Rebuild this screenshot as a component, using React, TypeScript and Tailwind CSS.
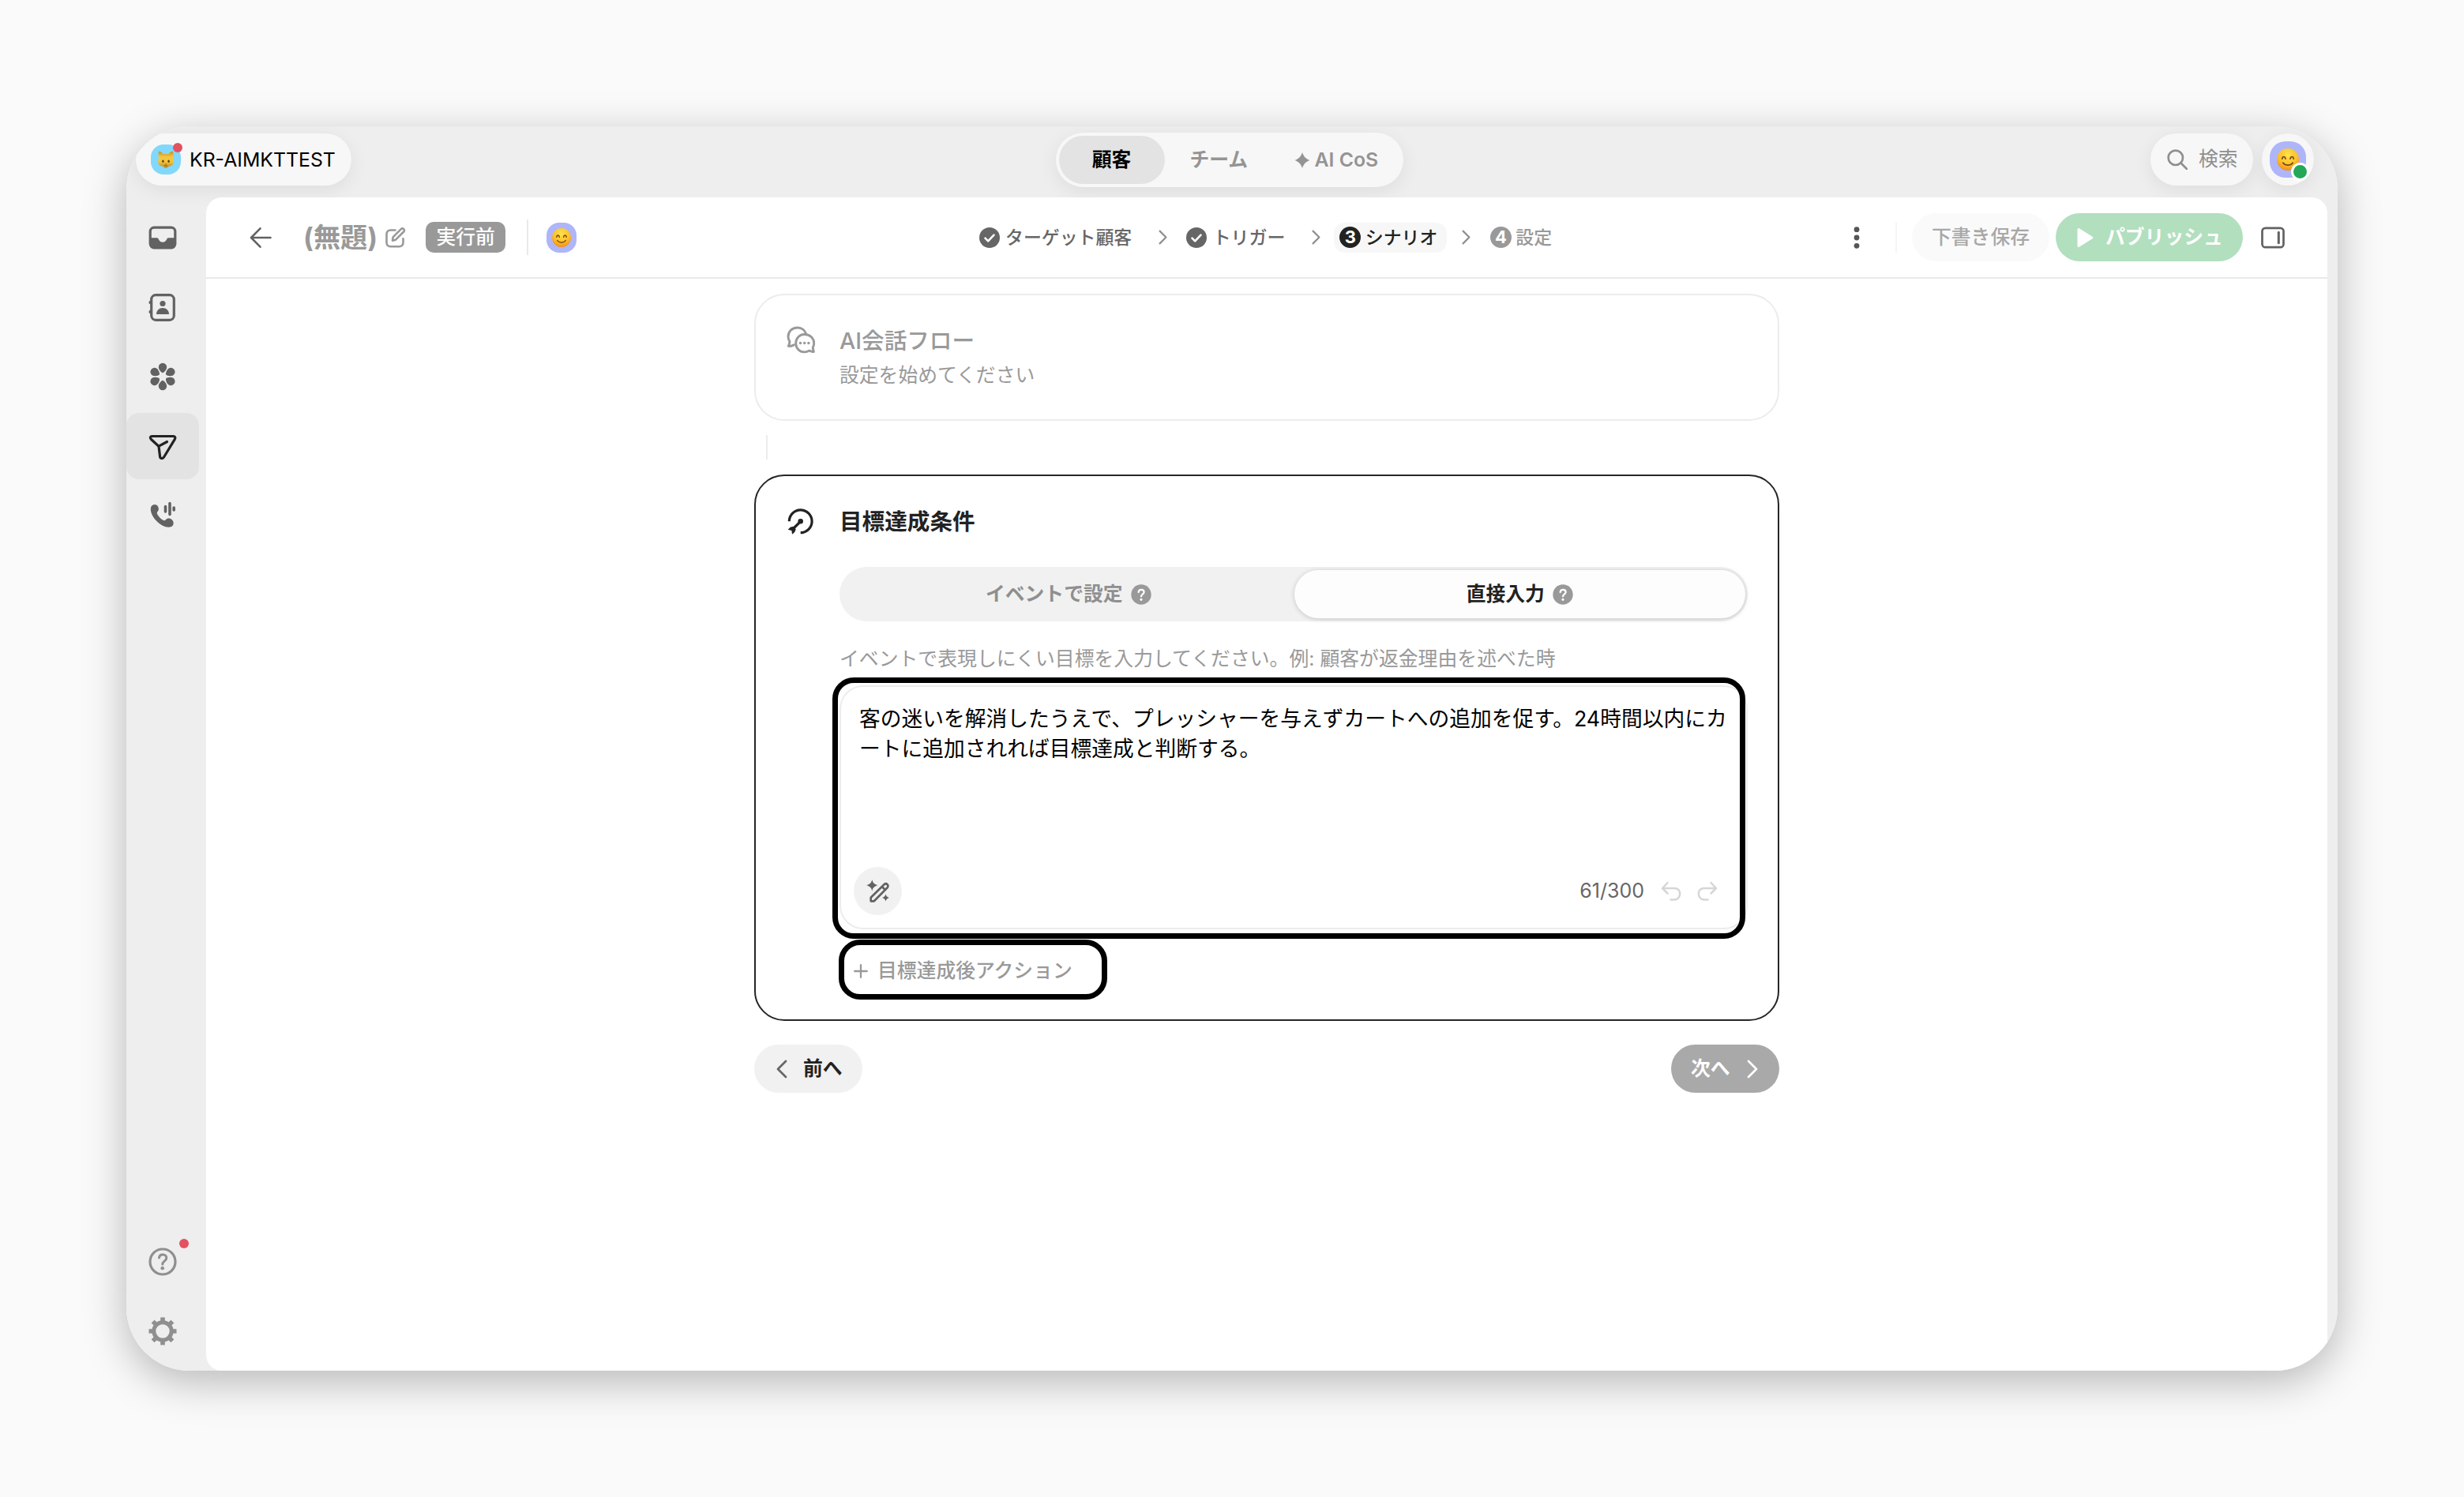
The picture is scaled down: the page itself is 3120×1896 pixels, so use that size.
import type { ReactNode } from "react";

const navItems = [
  { id: "inbox", icon: <InboxIcon />, active: false },
  { id: "contacts", icon: <ContactsIcon />, active: false },
  { id: "flower", icon: <FlowerIcon />, active: false },
  { id: "campaign", icon: <CampaignIcon />, active: true },
  { id: "call", icon: <CallIcon />, active: false },
];

const steps = [
  { label: "ターゲット顧客", state: "done", number: 1 },
  { label: "トリガー", state: "done", number: 2 },
  { label: "シナリオ", state: "current", number: 3 },
  { label: "設定", state: "todo", number: 4 },
];

function InboxIcon() {
  return (
    <svg viewBox="0 0 38 38" className="size-[38px]" fill="none">
      <rect x="3.2" y="6.2" width="31.6" height="25.6" rx="5" stroke="#626262" strokeWidth="3.2" />
      <path d="M3 19.2h9c2 0 2 5.5 7 5.5s5-5.5 7-5.5H35V28c0 3-2 5-5 5H8c-3 0-5-2-5-5z" fill="#626262" />
    </svg>
  );
}

function ContactsIcon() {
  return (
    <svg viewBox="0 0 38 38" className="size-[38px]" fill="none">
      <rect x="4.7" y="3.7" width="28.6" height="31.6" rx="5.5" stroke="#626262" strokeWidth="3.2" />
      <circle cx="3.7" cy="13" r="2.3" fill="#626262" />
      <circle cx="3.7" cy="25" r="2.3" fill="#626262" />
      <circle cx="19" cy="14.5" r="3.6" fill="#626262" />
      <path d="M11 28c0-4.6 3.4-8 8-8s8 3.4 8 8z" fill="#626262" />
    </svg>
  );
}

function FlowerIcon() {
  return (
    <svg viewBox="0 0 38 38" className="size-[38px]" fill="#626262">
      {[0, 60, 120, 180, 240, 300].map((angle) => (
        <path
          key={angle}
          transform={`rotate(${angle} 19 19)`}
          d="M19 14.2c-1.5 0-5.2-4-5.2-7.2a5.2 5.2 0 0 1 10.4 0c0 3.2-3.7 7.2-5.2 7.2z"
        />
      ))}
    </svg>
  );
}

function CampaignIcon() {
  return (
    <svg
      viewBox="0 0 38 38"
      className="size-[38px]"
      fill="none"
      stroke="#222"
      strokeWidth="3.2"
      strokeLinecap="round"
      strokeLinejoin="round"
    >
      <path d="M5.5 6.5h27c2.2 0 3 2 1.8 3.8L20.5 33c-1.5 2.4-4.6 1.9-4.9-.8L14 19.2 4.2 10.3C2.6 8.8 3.3 6.5 5.5 6.5z" />
      <path d="M14 19.2 24.5 13.5" />
    </svg>
  );
}

function CallIcon() {
  return (
    <svg viewBox="0 0 38 38" className="size-[38px]">
      <path
        d="M4.5 7.5C6 4.5 11 4 13 7.5c1.2 2.2 1.4 4.6-.5 6.5-1.2 1.2-.8 2.5.3 4.2 1.8 3 4.2 5.3 7.2 6.8 1.2.6 2 .3 2.9-.8 2-2.3 5.6-2 8 .2 2.8 2.6 2.3 7-1 8.6-5 2.3-12.5-1-18.5-7S2.3 12 4.5 7.5z"
        fill="#626262"
      />
      <g stroke="#626262" strokeWidth="3.6" strokeLinecap="round">
        <path d="M22.5 7.5v6.5M28 3.5v14M33.2 9v3" />
      </g>
    </svg>
  );
}

function HelpIcon() {
  return (
    <svg viewBox="0 0 38 38" className="size-[38px]" fill="none" stroke="#8f8f8f" strokeLinecap="round">
      <circle cx="19" cy="19" r="16" strokeWidth="3.2" />
      <path d="M14.5 14c.3-2.6 2.2-4 4.7-4s4.6 1.7 4.6 4.2c0 4-5 3.9-5 8" strokeWidth="3" />
      <circle cx="18.7" cy="27.3" r="2.3" fill="#8f8f8f" stroke="none" />
    </svg>
  );
}

function GearIcon() {
  return (
    <svg viewBox="0 0 38 38" className="size-[38px]">
      <circle cx="19" cy="19" r="11.2" fill="none" stroke="#8f8f8f" strokeWidth="5" />
      {[0, 45, 90, 135, 180, 225, 270, 315].map((angle) => (
        <path key={angle} transform={`rotate(${angle} 19 19)`} d="M16.2 1.5h5.6v5l2 2h-9.6l2-2z" fill="#8f8f8f" />
      ))}
    </svg>
  );
}

function SmileFace({ className }: { className: string }) {
  return (
    <svg viewBox="0 0 28 28" className={className} fill="none">
      <defs>
        <radialGradient id="smile" cx="0.5" cy="0.3" r="0.72">
          <stop offset="0" stopColor="#ffe34d" />
          <stop offset="0.6" stopColor="#fdbf2a" />
          <stop offset="1" stopColor="#f08a1c" />
        </radialGradient>
      </defs>
      <circle cx="14" cy="14" r="14" fill="url(#smile)" />
      <path
        d="M6.8 13.2c.4-3.6 3.6-3.6 4.2 0M17 13.2c.6-3.6 3.8-3.6 4.2 0"
        stroke="#7a4412"
        strokeWidth="1.7"
        strokeLinecap="round"
      />
      <path d="M7.8 18.2c3.2 4 9.2 4 12.4 0" stroke="#7a4412" strokeWidth="1.7" strokeLinecap="round" />
    </svg>
  );
}

function CatFace() {
  return (
    <svg viewBox="0 0 20 22" className="h-[22px] w-[20px]">
      <defs>
        <linearGradient id="cat" x1="0" y1="0" x2="0" y2="1">
          <stop offset="0" stopColor="#c8901f" />
          <stop offset="0.35" stopColor="#f3c843" />
          <stop offset="0.65" stopColor="#f2c23a" />
          <stop offset="1" stopColor="#bd821c" />
        </linearGradient>
      </defs>
      <path
        d="M1 1c1.5-1 4 1 5.5 3h7c1.5-2 4-4 5.5-3 .8 2 0 6 0 8 1 3 1.3 6 0 8-2 2.500-5 2-6.500 3.500-1 1.500-4 1.500-5 0C6 19 3 19.500 1 17-.3 15 0 12 1 9c0-2-.8-6 0-8z"
        fill="url(#cat)"
      />
      <ellipse cx="6.4" cy="13.3" rx="1.2" ry="1.8" fill="#5b4010" />
      <ellipse cx="13.6" cy="13.3" rx="1.2" ry="1.8" fill="#5b4010" />
      <path d="M8.7 16.2h2.6L10 18z" fill="#b5713c" />
      <path d="M8 19.3 10 18l2 1.3" stroke="#8a6420" fill="none" />
    </svg>
  );
}

function ChevronIcon({ className, flip }: { className: string; flip?: boolean }) {
  return (
    <svg
      viewBox="0 0 14 24"
      className={className}
      fill="none"
      stroke="currentColor"
      strokeWidth="2.8"
      strokeLinecap="round"
      strokeLinejoin="round"
    >
      <path d={flip ? "M12 2 2 12l10 10" : "M2 2l10 10L2 22"} />
    </svg>
  );
}

function QuestionBadge() {
  return (
    <svg viewBox="0 0 26 26" className="size-[26px]" fill="none">
      <circle cx="13" cy="13" r="12.7" fill="#999" />
      <path
        d="M9.6 10.2c.2-2.3 1.6-3.4 3.5-3.4s3.5 1.2 3.5 3.1c0 2.7-3.6 2.8-3.6 5.6"
        stroke="#fff"
        strokeWidth="2.2"
        strokeLinecap="round"
      />
      <circle cx="13" cy="19.3" r="1.6" fill="#fff" />
    </svg>
  );
}

function StepBadge({ state, number }: { state: string; number: number }) {
  if (state === "done") {
    return (
      <svg viewBox="0 0 26 26" className="mr-[2px] size-[26px]" fill="none">
        <circle cx="13" cy="13" r="13" fill="#666" />
        <path
          d="M7.5 13.6l3.7 3.7 7.3-7.6"
          stroke="#fff"
          strokeWidth="2.6"
          strokeLinecap="round"
          strokeLinejoin="round"
        />
      </svg>
    );
  }
  return (
    <span
      className={`flex size-[27px] items-center justify-center rounded-full text-[22px] font-bold text-white ${
        state === "current" ? "bg-[#222]" : "bg-[#999]"
      }`}
    >
      {number}
    </span>
  );
}

function TopBar() {
  return (
    <div className="flex h-[90px] items-start justify-between pt-[9px] pr-[30px] pl-[12px]">
      <div className="flex flex-1">
        <div className="flex h-[66px] w-[273px] items-center rounded-full bg-[#f7f7f7] pl-[19px] shadow-[0_6px_24px_rgba(0,0,0,0.07)]">
          <div className="relative flex size-[38px] items-center justify-center rounded-[16px] bg-[#82d8fb]">
            <CatFace />
            <span className="absolute -top-[2px] -right-[2px] size-[12px] rounded-full bg-[#e2525f]" />
          </div>
          <span className="ml-[11px] pt-px text-[24.8px] whitespace-nowrap text-black">KR-AIMKTTEST</span>
        </div>
      </div>

      <div className="-mt-[1px] ml-[11px] flex h-[69px] w-[440px] items-center rounded-full bg-[#f7f7f7] pl-[4px] text-[24.8px] font-bold text-[#949494] shadow-[0_6px_24px_rgba(0,0,0,0.07)]">
        <div className="flex h-[61px] w-[134px] items-center justify-center rounded-full bg-[#e3e3e3] text-black">
          顧客
        </div>
        <div className="ml-[32px] w-[75px]">チーム</div>
        <div className="ml-[57px] flex items-center gap-[6px] font-semibold">
          <svg viewBox="0 0 20 20" className="size-[20px]" fill="#949494">
            <path d="M10 0c2 5.5 4 7.8 9.5 10-5.500 2.200-7.500 4.500-9.500 10-2-5.500-4-7.800-9.500-10C6 7.800 8 5.500 10 0z" />
          </svg>
          AI CoS
        </div>
      </div>

      <div className="flex flex-1 justify-end gap-[11px]">
        <div className="flex h-[66px] w-[130px] items-center rounded-full bg-[#f7f7f7] pl-[21px] text-[24.8px] text-[#8f8f8f] shadow-[0_6px_24px_rgba(0,0,0,0.07)]">
          <svg viewBox="0 0 26 26" className="size-[26px]" fill="none" stroke="#8f8f8f" strokeWidth="2.7">
            <circle cx="10.8" cy="10.8" r="9.2" />
            <path d="M17.3 17.3 25 25" strokeLinecap="round" />
          </svg>
          <span className="ml-[14px]">検索</span>
        </div>
        <div className="flex size-[66px] items-center justify-center rounded-full bg-[#f7f7f7] shadow-[0_6px_24px_rgba(0,0,0,0.07)]">
          <div className="relative flex size-[46px] items-center justify-center rounded-[20px] bg-[#aeb5f8]">
            <SmileFace className="size-[28px]" />
            <span className="absolute -right-[4px] -bottom-[4px] size-[23px] rounded-full border-[3.5px] border-white bg-[#22a857]" />
          </div>
        </div>
      </div>
    </div>
  );
}

function NavButton({ active, children }: { active?: boolean; children: ReactNode }) {
  return (
    <div
      className={`relative flex h-[84px] w-[92px] items-center justify-center rounded-[16px] ${
        active ? "bg-[#e3e3e3]" : ""
      }`}
    >
      {children}
    </div>
  );
}

function Sidebar() {
  return (
    <div className="flex w-[101px] shrink-0 flex-col gap-1 pt-[9px] pb-2">
      {navItems.map((item) => (
        <NavButton key={item.id} active={item.active}>
          {item.icon}
        </NavButton>
      ))}
      <div className="flex-1" />
      <NavButton>
        <HelpIcon />
        <span className="absolute top-[13px] right-[13px] size-[12px] rounded-full bg-[#e2525f]" />
      </NavButton>
      <NavButton>
        <GearIcon />
      </NavButton>
    </div>
  );
}

function Stepper() {
  return (
    <div className="flex items-center">
      {steps.map((step, index) => (
        <div key={step.label} className="flex items-center">
          {index > 0 && <ChevronIcon className="mr-[17px] ml-[19px] h-[19px] w-[11px] text-[#8f8f8f]" />}
          <div
            className={`flex h-[38px] items-center gap-[5.5px] rounded-[14px] pl-[7.5px] text-[22.9px] font-medium whitespace-nowrap ${
              step.state === "current"
                ? "bg-[#f7f7f7] pr-[12px] text-[#222]"
                : step.state === "done"
                  ? "pr-[14.5px] text-[#666]"
                  : "pr-[14.5px] text-[#999]"
            }`}
          >
            <StepBadge state={step.state} number={step.number} />
            <span className="pt-px">{step.label}</span>
          </div>
        </div>
      ))}
    </div>
  );
}

function Header() {
  return (
    <div className="flex h-[103px] shrink-0 items-center border-b-2 border-[#e9e9e9] pl-[55px]">
      <div className="flex w-[916px] items-center">
        <svg
          viewBox="0 0 28 28"
          className="size-[28px]"
          fill="none"
          stroke="#626262"
          strokeWidth="2.6"
          strokeLinecap="round"
          strokeLinejoin="round"
        >
          <path d="M26.5 14H2.5M13.5 2.3 2 14l11.5 11.7" />
        </svg>
        <span className="ml-[40px] pt-[2px] text-[34.2px] leading-none font-bold text-[#999]">(無題)</span>
        <svg
          viewBox="0 0 26 26"
          className="ml-[10px] size-[26px]"
          fill="none"
          stroke="#999"
          strokeWidth="2.6"
          strokeLinecap="round"
          strokeLinejoin="round"
        >
          <path d="M12.5 3.5H6.5c-3 0-5 2-5 5v10.7c0 3 2 5 5 5h11c3 0 5-2 5-5v-5" />
          <path d="M9 16.7l.6-4.4L19.8 2.1c1-1 2.4-1 3.4 0s1 2.4 0 3.4L13 15.7z" />
        </svg>
        <span className="ml-[25px] flex h-[39px] w-[101px] items-center justify-center rounded-[10px] bg-[#999] text-[24.8px] font-medium text-white">
          実行前
        </span>
        <span className="ml-[27px] h-[45px] w-[2px] bg-[#e9e9e9]" />
        <span className="ml-[23px] flex size-[38px] items-center justify-center rounded-[16px] bg-[#aeb5f8]">
          <SmileFace className="size-[24px]" />
        </span>
      </div>

      <Stepper />

      <div className="ml-auto flex items-center pr-[54px]">
        <svg viewBox="0 0 8 28" className="h-[28px] w-[8px]" fill="#555">
          <circle cx="4" cy="3.7" r="3.4" />
          <circle cx="4" cy="14" r="3.4" />
          <circle cx="4" cy="24.3" r="3.4" />
        </svg>
        <span className="ml-[45px] h-[38px] w-[2px] bg-[#f5f5f5]" />
        <div className="ml-[19px] flex h-[61px] w-[174px] items-center justify-center rounded-full bg-[#fafafa] pt-px text-[24.8px] font-medium text-[#a8a8a8]">
          下書き保存
        </div>
        <div className="ml-[8px] flex h-[61px] w-[237px] items-center rounded-full bg-[#b2dfbe] pl-[27px] text-[24.8px] font-bold text-white">
          <svg viewBox="0 0 21 26" className="h-[26px] w-[21px]" fill="#fff" stroke="#fff" strokeWidth="3" strokeLinejoin="round">
            <path d="M2 2.5v21L18.8 13z" />
          </svg>
          <span className="ml-[15px]">パブリッシュ</span>
        </div>
        <svg viewBox="0 0 30 28" className="ml-[23px] h-[28px] w-[30px]" fill="none" stroke="#626262" strokeWidth="2.7">
          <rect x="1.5" y="1.8" width="27" height="24.4" rx="4" />
          <path d="M22.3 7.3v13.4" strokeWidth="3" strokeLinecap="round" />
        </svg>
      </div>
    </div>
  );
}

function FlowCard() {
  return (
    <div className="flex h-[161px] rounded-[38px] border-2 border-[#ececec] pt-[38px] pl-[38px]">
      <svg
        viewBox="0 0 38 38"
        className="size-[38px]"
        fill="none"
        stroke="#999"
        strokeWidth="2.9"
        strokeLinejoin="round"
        strokeLinecap="round"
      >
        <path d="M25.5 10.5C24 6 19.5 3 14.5 3 8 3 3 8 3 14.3c0 2.4.7 4.6 2 6.5-.3 2-.9 3.8-1.6 5.6 2.6.3 5-.3 7-1.6" />
        <path d="M23.7 11.5c-6.3 0-11 5-11 11.2 0 6.3 4.8 11.2 11 11.2 2.3 0 4.4-.7 6.2-1.8 1.6 1 3.5 1.6 5.5 1.4-.6-1.6-.9-3.6-1.2-5.3 1-1.6 1.5-3.5 1.5-5.5 0-6.2-5-11.2-12-11.2z" />
        <g fill="#999" stroke="none">
          <circle cx="18.5" cy="22.5" r="1.7" />
          <circle cx="23.7" cy="22.5" r="1.7" />
          <circle cx="28.9" cy="22.5" r="1.7" />
        </g>
      </svg>
      <div className="ml-[30px] flex flex-col">
        <span className="pt-px text-[28.6px] leading-[38px] font-medium text-[#999]">AI会話フロー</span>
        <span className="mt-[7px] text-[24.8px] leading-[34px] text-[#999]">設定を始めてください</span>
      </div>
    </div>
  );
}

function GoalInput() {
  return (
    <div className="relative mt-[17px] flex h-[309px] w-[1150px] flex-col rounded-[30px] border-2 border-[#ececec] px-[23px] pt-[21px]">
      <p className="text-[26.75px] leading-[38px] whitespace-nowrap text-black">
        客の迷いを解消したうえで、プレッシャーを与えずカートへの追加を促す。24時間以内にカ
        <br />
        ートに追加されれば目標達成と判断する。
      </p>
      <div className="mt-auto mb-[16px] -ml-[7px] flex items-center">
        <div className="flex size-[61px] items-center justify-center rounded-full bg-[#f1f1f1]">
          <svg viewBox="0 0 30 30" className="size-[30px]" fill="#626262">
            <path d="M7.3 0c1 4 2.3 5.7 7 7.2-4.7 1.5-6 3.2-7 7.2-1-4-2.3-5.7-7-7.2 4.7-1.5 6-3.2 7-7.2z" />
            <path d="M24.5 18.5c.7 2.4 1.5 3.5 4.5 4.5-3 1-3.8 2.1-4.5 4.5-.7-2.4-1.5-3.5-4.5-4.5 3-1 3.8-2.1 4.5-4.5z" />
            <path
              d="M5.7 27.3v-4.6L22.5 6.2c1.2-1.1 3-1.1 4.1 0s1.1 2.9 0 4L9.8 27.3zM19.8 9l4 4"
              fill="none"
              stroke="#626262"
              strokeWidth="2.7"
              strokeLinejoin="round"
            />
          </svg>
        </div>
        <span className="ml-auto text-[25px] text-[#666]">61/300</span>
        <svg
          viewBox="0 0 26 26"
          className="ml-[21px] size-[26px]"
          fill="none"
          stroke="#d6d6d6"
          strokeWidth="2.5"
          strokeLinecap="round"
          strokeLinejoin="round"
        >
          <path d="M8.5 2 2 9l6.5 6.5M2 9h15.5c3.8 0 6.7 2.9 6.7 7s-2.9 7.5-6.7 7.5H12.5" />
        </svg>
        <svg
          viewBox="0 0 26 26"
          className="mr-[13px] ml-[20px] size-[26px]"
          fill="none"
          stroke="#d6d6d6"
          strokeWidth="2.5"
          strokeLinecap="round"
          strokeLinejoin="round"
        >
          <path d="M17.5 2 24 9l-6.5 6.5M24 9H8.5C4.7 9 1.8 11.9 1.8 16s2.9 7.5 6.7 7.5h5" />
        </svg>
      </div>
      {/* highlight frame */}
      <div className="absolute -top-[12px] -left-[11px] h-[331px] w-[1156px] rounded-[27px] border-[7px] border-black" />
    </div>
  );
}

function GoalCard() {
  return (
    <div className="flex h-[692px] rounded-[38px] border-2 border-[#262626] pt-[38px] pl-[38px]">
      <svg viewBox="0 0 38 38" className="size-[38px] shrink-0" fill="none" stroke="#222" strokeWidth="3.2">
        <path d="M4.3 19.3A14.4 14.4 0 1 1 18.7 33.7" />
        <circle cx="18.7" cy="19.3" r="3.3" fill="#222" stroke="none" />
        <path d="M18.7 19.3 10 28" />
        <path d="M2.7 29.7l3-3 3.8-1 3.3 3.5-1.6 3.9-3.2 2.6-.6-4.7z" fill="#222" stroke="none" />
      </svg>
      <div className="ml-[30px]">
        <div className="pt-px text-[28.6px] leading-[38px] font-bold text-[#222]">目標達成条件</div>
        <div className="mt-[38px] flex h-[69px] w-[1150px] rounded-full bg-[#f1f1f1] py-1 pr-[3px] pl-[4px] text-[24.8px] font-bold">
          <div className="flex flex-1 items-center justify-center gap-[10px] text-[#8f8f8f]">
            イベントで設定
            <QuestionBadge />
          </div>
          <div className="flex flex-1 items-center justify-center gap-[10px] rounded-full bg-[#fdfdfe] text-[#222] shadow-[0_1px_6px_rgba(0,0,0,0.18)]">
            直接入力
            <QuestionBadge />
          </div>
        </div>
        <p className="mt-[30px] text-[24.85px] leading-[34px] text-[#999]">
          イベントで表現しにくい目標を入力してください。例: 顧客が返金理由を述べた時
        </p>
        <GoalInput />
        <div className="mt-[13px] -ml-[1px] flex h-[76px] w-[340px] items-center rounded-[27px] border-[7px] border-black pt-[3px] pl-[12px] text-[24.8px] font-medium text-[#999]">
          <svg viewBox="0 0 18 18" className="size-[18px]" stroke="#999" strokeWidth="2.3" strokeLinecap="round">
            <path d="M9 1.2v15.6M1.2 9h15.6" />
          </svg>
          <span className="ml-[12px]">目標達成後アクション</span>
        </div>
      </div>
    </div>
  );
}

export default function App() {
  return (
    <div className="flex h-[1896px] w-[3120px] items-start bg-[#fafafa] pt-[160px] pl-[160px] font-['Inter','Noto_Sans_CJK_JP',sans-serif]">
      <div className="rounded-[80px] shadow-[0_14px_54px_rgba(0,0,0,0.27)]">
        <div className="flex h-[1576px] w-[2800px] flex-col overflow-hidden rounded-[80px] bg-[#eee]">
          <TopBar />
          <div className="flex flex-1">
            <Sidebar />
            <div className="flex w-[2686px] flex-col rounded-[20px] bg-white">
              <Header />
              <div className="ml-[694px] flex w-[1298px] flex-col pt-[19px]">
                <FlowCard />
                <div className="mt-[18px] mb-[19px] ml-[15px] h-[31px] w-[2px] bg-[#ececec]" />
                <GoalCard />
                <div className="mt-[30px] flex justify-between text-[24.8px] font-bold">
                  <div className="flex h-[61px] w-[137px] items-center rounded-full bg-[#f1f1f1] pl-[28px] text-[#222]">
                    <ChevronIcon flip className="h-[24px] w-[14px] text-[#666]" />
                    <span className="ml-[20px]">前へ</span>
                  </div>
                  <div className="flex h-[61px] w-[137px] items-center rounded-full bg-[#a9a9a9] pl-[25px] text-white">
                    <span>次へ</span>
                    <ChevronIcon className="ml-[21px] h-[24px] w-[14px]" />
                  </div>
                </div>
              </div>
            </div>
          </div>
        </div>
      </div>
    </div>
  );
}
